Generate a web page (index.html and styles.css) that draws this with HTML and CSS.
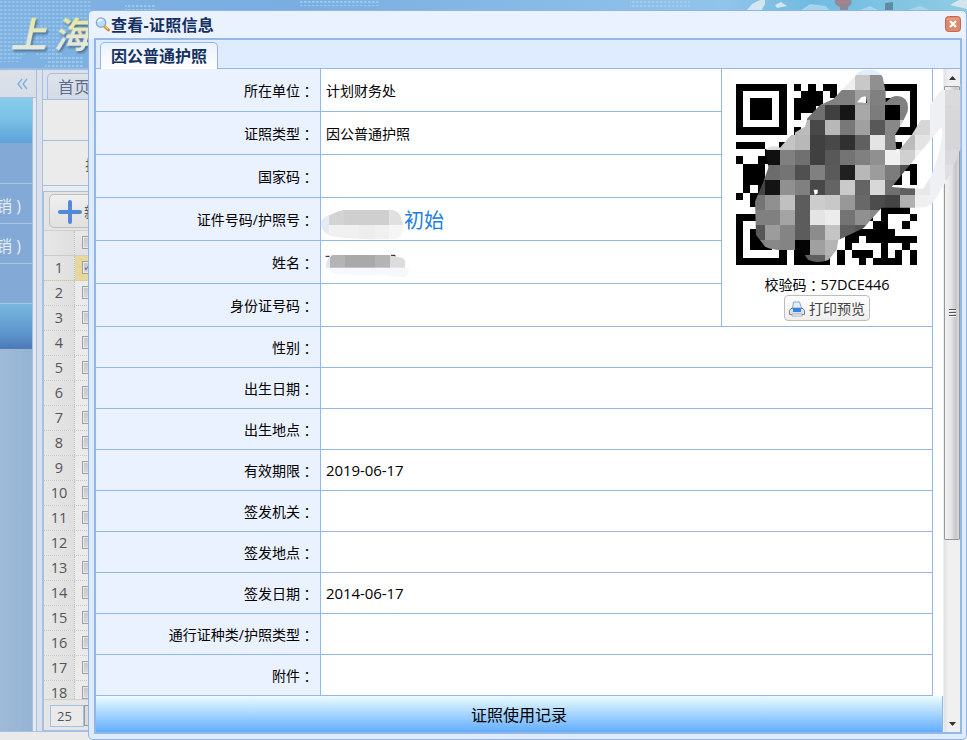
FILE: index.html
```html
<!DOCTYPE html>
<html lang="zh-CN">
<head>
<meta charset="utf-8">
<title>查看-证照信息</title>
<link rel="stylesheet" href="styles.css">
</head>
<body>
<div class="app">
  <header class="banner">
    <svg class="skyline" width="967" height="68" viewBox="0 0 967 68">
      <defs>
        <linearGradient id="sky"><stop offset="0" stop-color="#7fb2e2"/><stop offset=".3" stop-color="#7aaee0"/><stop offset=".75" stop-color="#92c3e9"/><stop offset=".84" stop-color="#6fbbe2"/><stop offset="1" stop-color="#8fcde2"/></linearGradient>
        <pattern id="dots" width="4" height="4" patternUnits="userSpaceOnUse"><rect width="2.6" height="2" y="1" fill="#a4d2ee"/></pattern>
      </defs>
      <rect width="967" height="68" fill="url(#sky)"/>
      <path d="M0 0H92V20L76 24 60 36 50 60H42L30 48 18 62H0Z" fill="url(#dots)" opacity=".55"/>
      <path d="M52 50h10v5h22v13H44zM125 3h30v7h-30zM300 0h80v6h-80zM630 0h60v9h-60z" fill="url(#dots)" opacity=".7"/>
      <path d="M746 11l6-7 8-4h5v4l-4 7zM775 5l6-3 6 4-10 2zM950 5l9-5h8v9z" fill="#d3e6f0"/>
      <path d="M835 0h16q2 4-3 7v4h-8V7q-6-2-5-7z" fill="#8b8b98"/>
      <path d="M837 1h12v3h-12z" fill="#b07e8c"/>
      <path d="M885 3l8-1v9h-8z" fill="#5f8aa4"/>
      <path d="M800 11l10-7 16 2 4 5zM858 11l12-5 10 5zM905 11l15-5 12 5z" fill="#a7d4e8"/>
    </svg>
    <div class="brand"><span class="brand-text">上</span><span class="brand-text">海</span></div>
  </header>
  <div class="workspace">
    <aside class="sidebar">
      <div class="side-head">
        <svg width="11" height="12" viewBox="0 0 11 12"><path d="M5 1L1 6l4 5M10 1L6 6l4 5" fill="none" stroke="#82aede" stroke-width="1.4"/></svg>
      </div>
      <div class="side-menu">
        <div class="menu-title"></div>
        <div class="menu-item"></div>
        <div class="menu-item">销 )</div>
        <div class="menu-item">销 )</div>
        <div class="menu-item"></div>
        <div class="menu-title dark"></div>
      </div>
    </aside>
    <div class="splitter"></div>
    <main class="main">
      <div class="main-tabs"><div class="main-tab">首页</div></div>
      <div class="filter first"></div>
      <div class="filter"><span>护</span></div>
      <div class="grid">
        <div class="grid-bar">
          <div class="add-btn">
            <svg width="24" height="24" viewBox="0 0 24 24"><path d="M12 2v20M2 12h20" stroke="#5389d7" stroke-width="4" stroke-linecap="round"/></svg><span>新增</span>
          </div>
        </div>
        <div class="grid-head"><div class="num"></div><i class="check"></i></div>
        <div class="grid-body" id="grid-rows"></div>
        <div class="grid-foot"><div class="page-size">25</div><div class="trigger"></div></div>
      </div>
    </main>
  </div>
</div>

<section class="dialog">
  <div class="dialog-head">
    <svg width="16" height="16" viewBox="0 0 16 16"><path d="M9 9l4.500 4" stroke="#d88a2e" stroke-width="3" stroke-linecap="round"/><path d="M9 8.500l4 3.500" stroke="#f5c35c" stroke-width="1.200"/><circle cx="6" cy="5.500" r="4.600" fill="#b9e0fa" stroke="#8fa5c4" stroke-width="1.400"/><path d="M3 5q1-3 4-2" fill="none" stroke="#fff" stroke-width="1.500"/></svg>
    <h1>查看-证照信息</h1>
    <div class="close"><svg width="16" height="16" viewBox="0 0 16 16"><rect x=".5" y=".5" width="15" height="15" rx="3" fill="#dc8970" stroke="#c56755"/><path d="M2 3h12" stroke="#efab90"/><path d="M5 5l6 6M11 5l-6 6" stroke="#fff" stroke-width="2.400"/></svg></div>
  </div>
  <div class="dialog-body">
    <div class="tabs"><div class="tab">因公普通护照</div></div>
    <div class="scroller">
      <div class="content">
        <div class="form">
          <div class="top">
            <div class="fields tall">
              <div class="row"><div class="label">所在单位<b>：</b></div><div class="value">计划财务处</div></div>
              <div class="row"><div class="label">证照类型<b>：</b></div><div class="value">因公普通护照</div></div>
              <div class="row"><div class="label">国家码<b>：</b></div><div class="value"></div></div>
              <div class="row"><div class="label">证件号码/护照号<b>：</b></div><div class="value masked">
                <svg width="83" height="31" viewBox="0 0 249 93"><defs><clipPath id="m1"><path d="M0 35Q8 17 28 15L50 5 70 0H215Q240 5 242 30 252 50 242 75 230 90 200 88H140L60 83Q30 80 24 75 0 65 0 35Z"/></clipPath></defs><g clip-path="url(#m1)"><path d="M0 0h25v93H0z" fill="#e5ebf2"/><path d="M25 0h180v45H25z" fill="#cfcfcf"/><path d="M25 0h45v45H25z" fill="#d3d3d3"/><path d="M205 0h45v45h-45z" fill="#e0e0e0"/><path d="M25 45h180v48H25z" fill="#f0f0f0"/><path d="M115 45h45v48h-45z" fill="#ededed"/><path d="M205 45h45v48h-45z" fill="#f5f5f5"/></g></svg><a>初始</a></div></div>
              <div class="row"><div class="label">姓名<b>：</b></div><div class="value masked name">
                <svg width="84" height="25" viewBox="0 0 252 75"><path d="M2 7h14M18 3l6 4M198 4h12v4" fill="none" stroke="#111" stroke-width="3"/><path d="M15 3h180v38h55q5 20-10 27-30 5-60-6l-80 2-60-3q-30-5-35-30z" fill="#f5f9fe"/><path d="M15 10v31H3Q2 20 15 10z" fill="#dfe6ef"/><path d="M15 10l8-7h37v38H15z" fill="#b4b4b4"/><path d="M60 3h90v38H60z" fill="#a9a9a9"/><path d="M150 3h45v38h-45z" fill="#b4b4b4"/><path d="M195 5l25 4q18 2 20 10v22h-45z" fill="#dcdcdc"/></svg></div></div>
              <div class="row"><div class="label">身份证号码<b>：</b></div><div class="value"></div></div>
            </div>
            <div class="qr-panel">
              <svg class="qr" id="qr" width="182" height="182" viewBox="0 0 25.150 25.150" shape-rendering="crispEdges"></svg>
              <div class="verify">校验码<b>：</b><span>57DCE446</span></div>
              <div class="print-btn">
                <svg width="16" height="16" viewBox="0 0 16 16"><path d="M4.500 1h6l2 6h-9z" fill="#e5effa" stroke="#8ba6c5"/><path d="M2 7.500h12l1.500 2v4H.5v-4z" fill="#dde1e8" stroke="#7b818b"/><path d="M4 7h8v4H4z" fill="#2e86e6"/><path d="M3 13h10v2H3z" fill="#fff" stroke="#9a9da5" stroke-width=".8"/></svg><span>打印预览</span>
              </div>
            </div>
          </div>
          <div class="fields">
            <div class="row"><div class="label">性别<b>：</b></div><div class="value"></div></div>
            <div class="row"><div class="label">出生日期<b>：</b></div><div class="value"></div></div>
            <div class="row"><div class="label">出生地点<b>：</b></div><div class="value"></div></div>
            <div class="row"><div class="label">有效期限<b>：</b></div><div class="value"><span class="date">2019-06-17</span></div></div>
            <div class="row"><div class="label">签发机关<b>：</b></div><div class="value"></div></div>
            <div class="row"><div class="label">签发地点<b>：</b></div><div class="value"></div></div>
            <div class="row"><div class="label">签发日期<b>：</b></div><div class="value"><span class="date">2014-06-17</span></div></div>
            <div class="row"><div class="label">通行证种类/护照类型<b>：</b></div><div class="value"></div></div>
            <div class="row"><div class="label">附件<b>：</b></div><div class="value"></div></div>
          </div>
        </div>
        <div class="records">证照使用记录</div>
      </div>
      <div class="scrollbar">
        <div class="arrow"><svg width="7" height="4" viewBox="0 0 7 4"><path d="M0 4l3.500-4L7 4z" fill="#333"/></svg></div>
        <div class="thumb"><svg width="7" height="8" viewBox="0 0 7 8"><path d="M0 .5h7M0 3.500h7M0 6.500h7" stroke="#555"/><path d="M0 1.500h7M0 4.500h7M0 7.500h7" stroke="#f6f6f6"/></svg></div>
        <div class="track"></div>
        <div class="arrow"><svg width="7" height="4" viewBox="0 0 7 4"><path d="M0 0l3.500 4L7 0z" fill="#333"/></svg></div>
      </div>
    </div>
  </div>
</section>

<svg class="smudge" width="247" height="215" viewBox="0 0 741 645">
  <defs><clipPath id="blob"><path clip-rule="evenodd" d="M405 34Q415 14 448 13 475 14 488 36L497 80V112L515 97Q538 87 556 103 568 118 562 142L548 172 525 210 530 264 575 210 630 120 670 65Q690 42 710 50L722 58V250L690 330 650 395Q635 428 600 428H485L430 490 355 525 350 555 325 585Q295 597 265 585L243 555H200Q160 557 135 545L108 510 105 410 130 350 145 308 137 255Q158 237 180 248L215 208 255 185 262 160 300 120 340 102ZM665 185L592 272 515 366 560 370 610 371 635 330 655 270 667 215ZM411 112L425 96 437 94 441 114ZM281 374H293V385L284 390Z"/></clipPath></defs>
  <g clip-path="url(#blob)" id="mosaic" shape-rendering="crispEdges"></g>
</svg>
<script src="app.js"></script>
</body>
</html>
```

FILE: styles.css
```css
* { box-sizing: border-box; }
body {
  margin: 0;
  width: 967px;
  height: 740px;
  overflow: hidden;
  position: relative;
  background: #eaeaea;
  font: 14px/20px "Open Sans", "Noto Sans CJK SC", sans-serif;
  color: #000;
}
svg { display: block; flex: none; }
b { font-weight: 400; font-family: "Noto Sans CJK TC", sans-serif; }

.app { height: 740px; display: flex; flex-direction: column; }
.banner { height: 68px; flex: none; position: relative; overflow: hidden; }
.brand {
  position: absolute;
  left: 14px;
  top: 7px;
  display: flex;
  gap: 7px;
  font: 700 36px/50px "Noto Sans CJK SC", sans-serif;
  transform: skewX(-12deg);
  filter: drop-shadow(2px 2px 1px #4a7198);
}
.brand-text {
  background: linear-gradient(#e8e79d 25%, #e5e8d8 65%);
  -webkit-background-clip: text;
  background-clip: text;
  color: transparent;
}
.workspace {
  height: 664px;
  display: flex;
  border-top: 2px solid #a0bbdd;
  border-bottom: 1px solid #a7bfe0;
}
.sidebar { width: 37px; border-right: 1px solid #a7bfe0; display: flex; flex-direction: column; background: #e6eaf0; }
.side-head {
  height: 28px;
  flex: none;
  display: flex;
  align-items: center;
  justify-content: flex-end;
  padding-right: 8px;
  background: linear-gradient(#dce1e9, #d8dee7);
  border-bottom: 1px solid #a7bfe0;
}
.side-menu { flex: 1; width: 33px; background: linear-gradient(90deg, #9fbad6, #94b4d5); border-right: 1px solid #a7bfe0; }
.menu-title { height: 45px; background: linear-gradient(#87cdea, #7bc1e5 45%, #5ca2d9); }
.menu-title.dark { background: linear-gradient(#78b7df, #5c92ca 70%, #4c7cb9 95%, #557db0); }
.menu-item {
  height: 40px;
  background: #83aad7;
  border-bottom: 1px solid #a9c6e5;
  color: #e3ebf3;
  font-size: 16px;
  line-height: 44px;
  white-space: nowrap;
  text-indent: -4px;
  overflow: hidden;
}
.menu-item:nth-child(2) { height: 41px; }
.splitter { width: 5px; background: #dbe1ea; }
.main { flex: 1; border-left: 1px solid #a7bfe0; display: flex; flex-direction: column; background: #ebebeb; }
.main-tabs { height: 30px; flex: none; background: #dbe1ea; border-bottom: 1px solid #a7bfe0; padding: 3px 0 0 4px; }
.main-tab {
  width: 80px;
  height: 26px;
  border: 1px solid #a7bfe0;
  border-bottom: 0;
  border-radius: 5px 0 0;
  padding-left: 10px;
  background: linear-gradient(#dee3ea, #d3dae6);
  color: #5a6d8c;
  font-size: 16px;
  line-height: 27px;
}
.filter { height: 45px; flex: none; border-bottom: 1px solid #a7bfe0; padding: 14px 0 0 42px; color: #555; overflow: hidden; }
.filter.first { height: 41px; }
.grid { margin-top: 5px; flex: 1; min-height: 0; border: solid #a7bfe0; border-width: 1px 0 1px 1px; display: flex; flex-direction: column; }
.grid-bar { height: 39px; flex: none; padding: 2px 0 0 5px; border-bottom: 1px solid #cfcfcf; background: #e4e4e4; }
.add-btn {
  width: 90px;
  height: 34px;
  border: 1px solid #bfbfbf;
  border-radius: 5px;
  background: linear-gradient(#efefef, #e0e0e0);
  display: flex;
  align-items: center;
  gap: 2px;
  padding: 1px 0 0 8px;
  color: #555;
}
.grid-head { height: 25px; flex: none; display: flex; border-bottom: 1px solid #ccc; background: linear-gradient(#e8e8e8, #e0e0e0); }
.grid-body { flex: 1; min-height: 0; overflow: hidden; }
.grid-row { height: 25px; display: flex; border-bottom: 1px dotted #c4c4c4; background: #ebebeb; }
.num {
  width: 31px;
  border-right: 1px dotted #c0c0c0;
  text-align: center;
  font-size: 14.500px;
  line-height: 24px;
  color: #555;
  background: linear-gradient(90deg, #e7e7e7, #dfdfdf);
}
.grid-row.selected { background: #e8d79a; }
.check { width: 13px; height: 13px; margin: 5px 0 0 7px; border: 1px solid #a0a0a0; background: linear-gradient(135deg, #bfc3c8, #e4e4e4); box-shadow: inset 0 0 0 1px #e8e8e8; }
.grid-row.selected .check { color: #5874ab; font: 11px/11px "DejaVu Sans", sans-serif; }
.grid-foot { height: 31px; flex: none; border-top: 1px solid #cfcfcf; display: flex; padding: 5px 0 0 6px; background: #e5e5e5; }
.page-size { width: 34px; height: 22px; border: 1px solid #a4c0e4; background: #eaeaea; padding-left: 6px; font-size: 13px; line-height: 21px; color: #555; }
.trigger { width: 17px; height: 21px; border: 1px solid #999; background: #dcdcdc; }

.dialog {
  position: absolute;
  left: 88px;
  top: 10px;
  width: 879px;
  height: 730px;
  border: 1px solid #8fb5e8;
  border-radius: 5px;
  background: linear-gradient(#eaf1ff, #eaf1ff 28px, #dfebfe 28px);
  padding: 0 4px 0 6px;
}
.dialog-head { height: 27px; display: flex; align-items: center; }
.dialog-head h1 { margin: 0 auto 0 0; font-size: 16px; line-height: 26px; letter-spacing: .25px; color: #14305f; }
.close { margin-right: 1px; margin-top: -2px; }
.dialog-body { height: 696px; width: 868px; margin-left: -1px; border: 2px solid #94b8e6; display: flex; flex-direction: column; }
.tabs { height: 29px; flex: none; border-bottom: 1px solid #94b8e6; background: #dfebfe; padding: 2px 0 0 4px; }
.tab {
  width: 118px;
  height: 27px;
  border: 1px solid #94b8e6;
  border-bottom: 0;
  border-radius: 5px 5px 0 0;
  background: linear-gradient(#eaf1ff, #fff);
  text-align: center;
  font-size: 16px;
  font-weight: 700;
  line-height: 26px;
  color: #14305f;
}
.scroller { flex: 1; min-height: 0; display: flex; background: #fff; }
.content { width: 847px; flex: none; }
.form { width: 837px; border-right: 1px solid #94b8e6; }
.top { display: flex; }
.fields { flex: 1; }
.row { display: flex; height: 41px; border-bottom: 1px solid #94b8e6; }
.tall .row { height: 43px; }
.label {
  width: 225px;
  flex: none;
  border-right: 1px solid #94b8e6;
  background: #eaf1ff;
  display: flex;
  align-items: center;
  justify-content: flex-end;
  padding: 2px 6px 0 0;
}
.value { flex: 1; display: flex; align-items: center; padding: 2px 0 0 5px; }
.date { font-size: 15px; letter-spacing: -.08px; margin-top: -2px; }
.masked { padding-left: 0; }
.masked svg { margin-top: 10px; }
.masked a { margin-top: 2px; font-size: 20px; line-height: 30px; color: #2080dc; }
.masked.name svg { margin: 7px 0 0 4px; }
.qr-panel { width: 211px; height: 258px; border-left: 1px solid #94b8e6; border-bottom: 1px solid #94b8e6; padding-top: 15px; display: flex; flex-direction: column; align-items: center; }
.verify { height: 20px; margin-top: 9px; display: flex; }
.verify span { font-size: 14.500px; }
.print-btn {
  width: 86px;
  height: 26px;
  border: 1px solid #bdbdbd;
  border-radius: 4px;
  background: linear-gradient(#fff, #eee);
  display: flex;
  align-items: center;
  gap: 4px;
  padding: 1px 0 0 4px;
  color: #444;
}
.records {
  height: 36px;
  border-right: 1px solid #94b8e6;
  background: linear-gradient(#ecfcff, #61adff);
  text-align: center;
  font-size: 16px;
  line-height: 38px;
}
.scrollbar { width: 17px; display: flex; flex-direction: column; background: linear-gradient(90deg, #e2e2e2, #f0f0f0 5px); border-left: 1px solid #eee; }
.arrow { height: 17px; flex: none; display: flex; align-items: center; justify-content: center; }
.thumb { height: 454px; border: 1px solid #979797; border-radius: 1px; background: linear-gradient(90deg, #f2f2f2, #e4e4e6 45%, #c6c6cc 75%, #d8d8dc); display: flex; align-items: center; justify-content: center; }
.track { flex: 1; }
.smudge { position: absolute; left: 720px; top: 65px; pointer-events: none; }
```

FILE: app.js
```js
const NS = "http://www.w3.org/2000/svg";

function rect(parent, x, y, w, h, fill) {
  const r = document.createElementNS(NS, "rect");
  r.setAttribute("x", x);
  r.setAttribute("y", y);
  r.setAttribute("width", w);
  r.setAttribute("height", h);
  r.setAttribute("fill", fill);
  parent.appendChild(r);
}

// Record list rows
const list = document.getElementById("grid-rows");
for (let i = 1; i <= 18; i++) {
  const row = document.createElement("div");
  row.className = i === 1 ? "grid-row selected" : "grid-row";
  row.innerHTML = `<div class="num">${i}</div><i class="check">${i === 1 ? "✓" : ""}</i>`;
  list.appendChild(row);
}

// QR modules, one string per row
const modules = [
  "#######.#.#.##....#######",
  "#.....#..###.#....#.....#",
  "#.###.#.####......#.###.#",
  "#.###.#.###.......#.###.#",
  "#.###.#.#.........#.###.#",
  "#.....#...........#.....#",
  "#######.#.#.#.#.#.#######",
  ".........................",
  "####..#..............##..",
  "....###..................",
  "#..##....................",
  ".###...................##",
  ".###..................#.#",
  ".###.................##.#",
  ".#.#.....................",
  "#.##.....................",
  "..##.....................",
  "....................####.",
  "#######...........#.#...#",
  "#.....#............##..#.",
  "#.###.#.......########...",
  "#.###.#........##.#######",
  "#.###.#.##.....#....#..#.",
  "#.....#.##....#.###.#.#.#",
  "#######.#####.#..#.####.#",
];
const qr = document.getElementById("qr");
modules.forEach((line, y) => {
  for (const m of line.matchAll(/#+/g)) rect(qr, m.index, y, m[0].length, 1, "#000");
});

// Mosaic tiles: grey levels per tile, first tile at x = 90, y = -15
const tiles = [
  "- - - - - - - e1eefa e1eefa",
  "- - - - - - ee c8 90",
  "- - - - 88 80 80 a0 80 80 80 - eff0f4 dadadc",
  "- - - 77 70 40 16 a8 7c 00 80 - eff0f4 d8d8da",
  "- - - bb 48 b8 78 a0 58 88 d0 d6 eff0f4 d6d6d8",
  "- dd c4 b8 40 48 30 60 e4 88 bb e4 eff0f4 d6d6d8",
  "66 10 80 70 40 58 74 80 90 f0 d0 f0 eff0f4 dadade",
  "66 6c 74 50 80 5a 20 b8 9c 7c 50 f0 eff0f4 e0e0e4",
  "44 14 90 80 48 64 ca 64 d8 70 60 e8 eff0f4 eff0f4",
  "74 90 c0 5c cc c8 98 68 4c 44 b0 f0 eff0f4",
  "80 80 a4 5c e4 ec 74 90 88",
  "58 9c 84 5c 8c c4 60 55",
  "80 88 84 04 a0 b4 aa",
  "- - - 60 60 aa",
];
const mosaic = document.getElementById("mosaic");
tiles.forEach((line, r) => {
  line.split(" ").forEach((v, c) => {
    if (v === "-") return;
    const hex = v.length === 2 ? v + v + v : v;
    rect(mosaic, 90 + c * 45, -15 + r * 45, 45, 45, "#" + hex);
  });
});
rect(mosaic, 720, 30, 10, 320, "#d4dae8");
```
